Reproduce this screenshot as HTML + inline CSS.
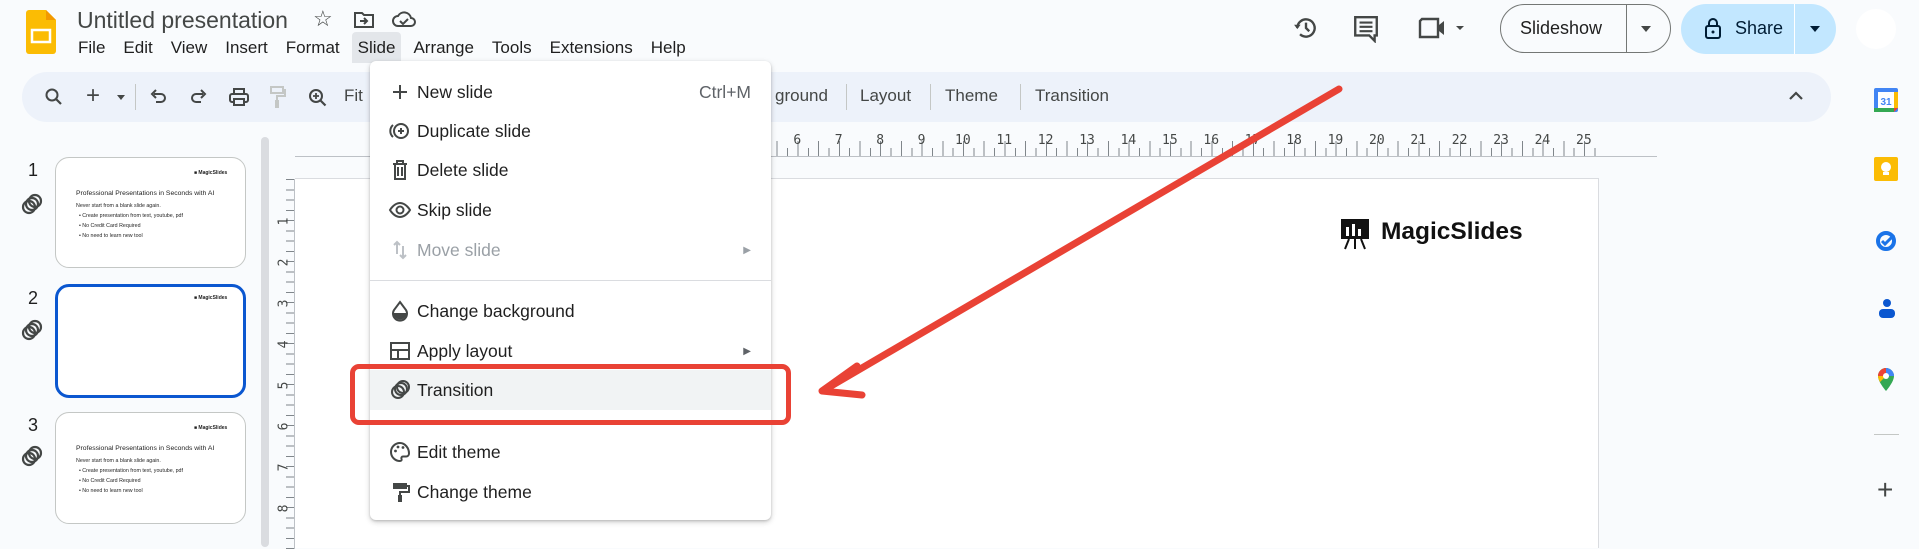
<!DOCTYPE html>
<html><head><meta charset="utf-8"><style>
*{margin:0;padding:0;box-sizing:border-box}
body{width:1919px;height:540px;overflow:hidden;background:#f9fbfd;font-family:"Liberation Sans",Arial,sans-serif;color:#1f1f1f;position:relative}
.a{position:absolute}
.menu span{margin-right:18px}
.tb{color:#444746;font-size:17px}
.mi{position:absolute;left:0;width:401px;height:40px;display:flex;align-items:center;font-size:17.5px;color:#1f1f1f}
.mi .ic{position:absolute;left:18px;top:8px;width:24px;height:24px}
.mi .t{position:absolute;left:47px}
.thumb{position:absolute;left:55px;width:191px;background:#fff;border:1px solid #c4c7c5;border-radius:14px}
.num{position:absolute;left:28px;font-size:18px;color:#1f1f1f}
.link{position:absolute;left:20px;width:24px;height:24px}
.rn{position:absolute;top:133px;font-size:13px;color:#444746;font-family:"DejaVu Sans Mono","Liberation Mono",monospace}
.vn{position:absolute;left:280px;font-size:13px;color:#444746;transform:rotate(-90deg);font-family:"DejaVu Sans Mono",monospace}
</style></head><body>

<svg class="a" style="left:26px;top:10px" width="30" height="44" viewBox="0 0 30 44"><path d="M3 0h17l10 10v31a3 3 0 0 1-3 3H3a3 3 0 0 1-3-3V3a3 3 0 0 1 3-3z" fill="#fbbc04"/><path d="M20 0l10 10H20z" fill="#f29900"/><rect x="6" y="20" width="18" height="12" fill="none" stroke="#fff" stroke-width="2.5"/></svg>
<div class="a" style="left:77px;top:7px;font-size:23px;color:#444746">Untitled presentation</div>
<div class="a" style="left:313px;top:6px;font-size:22px;color:#444746">☆</div>
<svg class="a" style="left:353px;top:10px" width="22" height="20" viewBox="0 0 22 20"><path d="M2 3h7l2 2h9v12H2z" fill="none" stroke="#444746" stroke-width="2"/><path d="M7 11h7M11 8l3 3-3 3" fill="none" stroke="#444746" stroke-width="2"/></svg>
<svg class="a" style="left:392px;top:10px" width="24" height="18" viewBox="0 0 24 18"><path d="M6 16a5 5 0 0 1 0-10 7 7 0 0 1 13 2 4 4 0 0 1 0 8z" fill="none" stroke="#444746" stroke-width="2"/><path d="M8 11l3 3 5-5" fill="none" stroke="#444746" stroke-width="2"/></svg>
<div class="a menu" style="left:78px;top:38px;font-size:17px;color:#1f1f1f;white-space:nowrap">
<span>File</span><span>Edit</span><span>View</span><span>Insert</span><span>Format</span><span style="background:#e3e6ea;padding:6px 6px;border-radius:4px 4px 0 0;margin-left:-6px;margin-right:12px">Slide</span><span>Arrange</span><span>Tools</span><span>Extensions</span><span>Help</span></div>

<svg class="a" style="left:1293px;top:15px" width="26" height="26" viewBox="0 0 24 24"><path d="M4 12a8 8 0 1 1 2.5 5.8" fill="none" stroke="#444746" stroke-width="2.2"/><path d="M1 9l3 4 3-4" fill="#444746"/><path d="M12 7v5l3 3" fill="none" stroke="#444746" stroke-width="2.2"/></svg>
<svg class="a" style="left:1353px;top:15px" width="26" height="28" viewBox="0 0 24 26"><path d="M2 2h20v17h-2v5l-5-5H2z" fill="none" stroke="#444746" stroke-width="2.2"/><path d="M6 7h12M6 11h12M6 15h12" stroke="#444746" stroke-width="2"/></svg>
<svg class="a" style="left:1418px;top:17px" width="50" height="22" viewBox="0 0 50 22"><path d="M4 2h16v18H2V4z" fill="none" stroke="#444746" stroke-width="2.4"/><path d="M21 8l5-4v14l-5-4z" fill="#444746"/><path d="M38 9h8l-4 4z" fill="#444746"/></svg>
<div class="a" style="left:1500px;top:4px;width:171px;height:49px;border:1px solid #747775;border-radius:25px"></div>
<div class="a" style="left:1626px;top:4px;width:1px;height:49px;background:#747775"></div>
<div class="a" style="left:1520px;top:18px;font-size:18px;color:#1f1f1f">Slideshow</div>
<div class="a" style="left:1641px;top:26px;border:5px solid transparent;border-top:6px solid #444746"></div>
<div class="a" style="left:1681px;top:4px;width:155px;height:50px;background:#c2e7ff;border-radius:25px"></div>
<div class="a" style="left:1794px;top:4px;width:1px;height:50px;background:#fff"></div>
<svg class="a" style="left:1704px;top:17px" width="18" height="22" viewBox="0 0 18 22"><rect x="2" y="9" width="14" height="12" rx="2" fill="none" stroke="#001d35" stroke-width="2"/><path d="M5 9V6a4 4 0 0 1 8 0v3" fill="none" stroke="#001d35" stroke-width="2"/><circle cx="9" cy="15" r="1.5" fill="#001d35"/></svg>
<div class="a" style="left:1735px;top:18px;font-size:18px;color:#001d35">Share</div>
<div class="a" style="left:1810px;top:26px;border:5px solid transparent;border-top:6px solid #001d35"></div>
<div class="a" style="left:1856px;top:9px;width:40px;height:40px;border-radius:50%;background:#fff"></div>

<div class="a" style="left:22px;top:72px;width:1809px;height:50px;background:#edf2fa;border-radius:25px"></div>
<svg class="a" style="left:44px;top:87px" width="20" height="20" viewBox="0 0 20 20"><circle cx="8" cy="8" r="5.5" fill="none" stroke="#444746" stroke-width="2"/><path d="M12 12l5 5" stroke="#444746" stroke-width="2.2"/></svg>
<div class="a tb" style="left:86px;top:82px;font-size:24px">+</div>
<div class="a" style="left:117px;top:95px;border:4px solid transparent;border-top:5px solid #444746"></div>
<div class="a" style="left:135px;top:84px;width:1px;height:26px;background:#c4c7c5"></div>
<svg class="a" style="left:150px;top:88px" width="18" height="18" viewBox="0 0 18 18"><path d="M4 6h7a4 4 0 0 1 0 8H6" fill="none" stroke="#444746" stroke-width="2"/><path d="M6 2L2 6l4 4" fill="none" stroke="#444746" stroke-width="2"/></svg>
<svg class="a" style="left:189px;top:88px" width="18" height="18" viewBox="0 0 18 18"><path d="M14 6H7a4 4 0 0 0 0 8h5" fill="none" stroke="#444746" stroke-width="2"/><path d="M12 2l4 4-4 4" fill="none" stroke="#444746" stroke-width="2"/></svg>
<svg class="a" style="left:228px;top:87px" width="22" height="20" viewBox="0 0 22 20"><rect x="2" y="7" width="18" height="8" rx="2" fill="none" stroke="#444746" stroke-width="2"/><rect x="6" y="2" width="10" height="5" fill="none" stroke="#444746" stroke-width="2"/><rect x="6" y="12" width="10" height="6" fill="#edf2fa" stroke="#444746" stroke-width="2"/></svg>
<svg class="a" style="left:268px;top:85px" width="18" height="24" viewBox="0 0 18 24"><rect x="3" y="2" width="12" height="6" fill="none" stroke="#c4c7c5" stroke-width="2"/><path d="M15 5h2v6H9v4" fill="none" stroke="#c4c7c5" stroke-width="2"/><rect x="7" y="15" width="4" height="8" fill="#c4c7c5"/></svg>
<svg class="a" style="left:307px;top:87px" width="22" height="22" viewBox="0 0 22 22"><circle cx="9" cy="9" r="6" fill="none" stroke="#444746" stroke-width="2"/><path d="M13.5 13.5l5 5" stroke="#444746" stroke-width="2.2"/><path d="M6 9h6M9 6v6" stroke="#444746" stroke-width="1.8"/></svg>
<div class="a tb" style="left:344px;top:86px">Fit</div>
<div class="a tb" style="left:775px;top:86px">ground</div>
<div class="a" style="left:846px;top:84px;width:1px;height:26px;background:#c4c7c5"></div>
<div class="a tb" style="left:860px;top:86px">Layout</div>
<div class="a" style="left:930px;top:84px;width:1px;height:26px;background:#c4c7c5"></div>
<div class="a tb" style="left:945px;top:86px">Theme</div>
<div class="a" style="left:1020px;top:84px;width:1px;height:26px;background:#c4c7c5"></div>
<div class="a tb" style="left:1035px;top:86px">Transition</div>
<svg class="a" style="left:1788px;top:90px" width="16" height="12" viewBox="0 0 16 12"><path d="M2 9l6-6 6 6" fill="none" stroke="#444746" stroke-width="2.2"/></svg>

<svg class="a" style="left:1874px;top:88px" width="24" height="24" viewBox="0 0 24 24"><rect x="0" y="0" width="24" height="24" rx="2" fill="#4285f4"/><rect x="4" y="4" width="16" height="16" fill="#fff"/><rect x="0" y="20" width="20" height="4" fill="#34a853"/><rect x="20" y="4" width="4" height="16" fill="#fbbc04"/><path d="M20 20h4l-4 4z" fill="#ea4335"/><text x="12" y="17" font-size="10" font-weight="bold" text-anchor="middle" fill="#4285f4" font-family="Liberation Sans">31</text></svg>
<svg class="a" style="left:1874px;top:157px" width="24" height="24" viewBox="0 0 24 24"><rect width="24" height="24" rx="2" fill="#fbbc04"/><circle cx="12" cy="10" r="5" fill="#fff"/><rect x="9" y="15" width="6" height="3" fill="#fff"/></svg>
<svg class="a" style="left:1875px;top:228px" width="24" height="24" viewBox="0 0 24 24"><circle cx="11" cy="13" r="8" fill="none" stroke="#1a73e8" stroke-width="4"/><path d="M7 13l3 3 9-9" fill="none" stroke="#1a73e8" stroke-width="3"/></svg>
<svg class="a" style="left:1877px;top:298px" width="20" height="22" viewBox="0 0 20 22"><circle cx="10" cy="5" r="4" fill="#0b57d0"/><rect x="2" y="11" width="16" height="9" rx="4" fill="#0b57d0"/></svg>
<svg class="a" style="left:1878px;top:368px" width="16" height="24" viewBox="0 0 16 24"><path d="M8 0a8 8 0 0 1 8 8c0 6-8 15-8 15S0 14 0 8a8 8 0 0 1 8-8z" fill="#34a853"/><path d="M8 0a8 8 0 0 1 8 8L8 8z" fill="#4285f4"/><path d="M8 0A8 8 0 0 0 0 8h8z" fill="#ea4335"/><path d="M0 8c0 2 1 4 2 6l6-6z" fill="#fbbc04"/><circle cx="8" cy="8" r="3" fill="#fff"/></svg>
<div class="a" style="left:1874px;top:434px;width:25px;height:1px;background:#c4c7c5"></div>
<div class="a" style="left:1877px;top:474px;font-size:28px;color:#444746">+</div>

<div class="num" style="top:160px">1</div>
<div class="num" style="top:288px">2</div>
<div class="num" style="top:415px">3</div>
<svg class="link" style="top:192px" viewBox="0 0 24 24"><circle cx="9" cy="15" r="6" fill="none" stroke="#444746" stroke-width="2.2"/><circle cx="12" cy="12" r="6" fill="none" stroke="#444746" stroke-width="2.2"/><circle cx="15" cy="9" r="6" fill="none" stroke="#444746" stroke-width="2.2"/></svg>
<svg class="link" style="top:318px" viewBox="0 0 24 24"><circle cx="9" cy="15" r="6" fill="none" stroke="#444746" stroke-width="2.2"/><circle cx="12" cy="12" r="6" fill="none" stroke="#444746" stroke-width="2.2"/><circle cx="15" cy="9" r="6" fill="none" stroke="#444746" stroke-width="2.2"/></svg>
<svg class="link" style="top:444px" viewBox="0 0 24 24"><circle cx="9" cy="15" r="6" fill="none" stroke="#444746" stroke-width="2.2"/><circle cx="12" cy="12" r="6" fill="none" stroke="#444746" stroke-width="2.2"/><circle cx="15" cy="9" r="6" fill="none" stroke="#444746" stroke-width="2.2"/></svg>

<div class="thumb" style="top:157px;height:111px">
<div class="a" style="left:138px;top:12px;font-size:5px;font-weight:bold">■ MagicSlides</div>
<div class="a" style="left:20px;top:32px;font-size:6.8px;white-space:nowrap">Professional Presentations in Seconds with AI</div>
<div class="a" style="left:20px;top:43px;font-size:5.3px;line-height:10px;white-space:nowrap">Never start from a blank slide again.<br>&nbsp;&nbsp;• Create presentation from text, youtube, pdf<br>&nbsp;&nbsp;• No Credit Card Required<br>&nbsp;&nbsp;• No need to learn new tool</div>
</div>
<div class="thumb" style="top:284px;height:114px;border:3px solid #0b57d0">
<div class="a" style="left:136px;top:8px;font-size:5px;font-weight:bold">■ MagicSlides</div>
</div>
<div class="thumb" style="top:412px;height:112px">
<div class="a" style="left:138px;top:12px;font-size:5px;font-weight:bold">■ MagicSlides</div>
<div class="a" style="left:20px;top:32px;font-size:6.8px;white-space:nowrap">Professional Presentations in Seconds with AI</div>
<div class="a" style="left:20px;top:43px;font-size:5.3px;line-height:10px;white-space:nowrap">Never start from a blank slide again.<br>&nbsp;&nbsp;• Create presentation from text, youtube, pdf<br>&nbsp;&nbsp;• No Credit Card Required<br>&nbsp;&nbsp;• No need to learn new tool</div>
</div>
<div class="a" style="left:261px;top:137px;width:8px;height:410px;background:#dadce0;border-radius:4px"></div>

<div class="a" style="left:549px;top:148px;width:1051px;height:8px;background:repeating-linear-gradient(90deg,#80868b 0 1px,transparent 1px 10.35px)"></div>
<div class="a" style="left:549px;top:141px;width:1051px;height:15px;background:repeating-linear-gradient(90deg,#80868b 0 1px,transparent 1px 20.7px)"></div>
<div class="a" style="left:295px;top:156px;width:1362px;height:1px;background:#bdc1c6"></div>
<div id="rn"></div>
<div class="a" style="left:286px;top:179px;width:8px;height:370px;background:repeating-linear-gradient(180deg,#80868b 0 1px,transparent 1px 10.25px)"></div>
<div class="a" style="left:294px;top:179px;width:1px;height:370px;background:#bdc1c6"></div>
<div class="vn" style="top:214px">1</div><div class="vn" style="top:255px">2</div><div class="vn" style="top:296px">3</div><div class="vn" style="top:337px">4</div><div class="vn" style="top:378px">5</div><div class="vn" style="top:419px">6</div><div class="vn" style="top:460px">7</div><div class="vn" style="top:501px">8</div>

<div class="a" style="left:295px;top:178px;width:1304px;height:370px;background:#fff;border-top:1px solid #dadce0;border-right:1px solid #dadce0"></div>
<svg class="a" style="left:1340px;top:218px" width="30" height="32" viewBox="0 0 30 32"><rect x="1" y="1" width="28" height="20" fill="#111"/><rect x="6" y="9" width="3" height="9" fill="#fff"/><rect x="12" y="6" width="3" height="12" fill="#fff"/><rect x="18" y="11" width="3" height="7" fill="#fff"/><path d="M9 21l-4 10M21 21l4 10M15 21v10" stroke="#111" stroke-width="2"/></svg>
<div class="a" style="left:1381px;top:218px;font-size:24.5px;font-weight:bold;color:#111">MagicSlides</div>

<div class="a" style="left:370px;top:61px;width:401px;height:459px;background:#fff;border-radius:6px;box-shadow:0 2px 6px rgba(0,0,0,.2),0 1px 2px rgba(0,0,0,.15)">
<div class="mi" style="top:11px"><svg class="ic" viewBox="0 0 24 24"><path d="M12 5v14M5 12h14" stroke="#444746" stroke-width="2"/></svg><span class="t">New slide</span><span style="position:absolute;right:20px;color:#5f6368">Ctrl+M</span></div>
<div class="mi" style="top:50px"><svg class="ic" viewBox="0 0 24 24"><circle cx="13" cy="12" r="7" fill="none" stroke="#444746" stroke-width="2"/><path d="M5 6a8 8 0 0 0 0 12" fill="none" stroke="#444746" stroke-width="2"/><path d="M13 9v6M10 12h6" stroke="#444746" stroke-width="2"/></svg><span class="t">Duplicate slide</span></div>
<div class="mi" style="top:89px"><svg class="ic" viewBox="0 0 24 24"><path d="M5 6h14M9 6V3h6v3M7 6v15h10V6M10 9v9M14 9v9" fill="none" stroke="#444746" stroke-width="2"/></svg><span class="t">Delete slide</span></div>
<div class="mi" style="top:129px"><svg class="ic" viewBox="0 0 24 24"><path d="M2 12s4-7 10-7 10 7 10 7-4 7-10 7S2 12 2 12z" fill="none" stroke="#444746" stroke-width="2"/><circle cx="12" cy="12" r="3.5" fill="none" stroke="#444746" stroke-width="2"/></svg><span class="t">Skip slide</span></div>
<div class="mi" style="top:169px;color:#9aa0a6"><svg class="ic" viewBox="0 0 24 24"><path d="M9 4v12M6 7l3-3 3 3M15 8v12M12 17l3 3 3-3" fill="none" stroke="#bdc1c6" stroke-width="2"/></svg><span class="t">Move slide</span><span style="position:absolute;right:20px;font-size:10px;color:#9aa0a6">▶</span></div>
<div class="a" style="left:0;top:219px;width:401px;height:1px;background:#dadce0"></div>
<div class="mi" style="top:230px"><svg class="ic" viewBox="0 0 24 24"><path d="M12 3l6 8a7 7 0 1 1-12 0z" fill="none" stroke="#444746" stroke-width="2"/><path d="M5.5 14h13a6.5 6.5 0 0 1-13 0z" fill="#444746"/></svg><span class="t">Change background</span></div>
<div class="mi" style="top:270px"><svg class="ic" viewBox="0 0 24 24"><rect x="3" y="4" width="18" height="16" fill="none" stroke="#444746" stroke-width="2"/><path d="M3 11h18M10 11v9" stroke="#444746" stroke-width="2"/></svg><span class="t">Apply layout</span><span style="position:absolute;right:20px;font-size:10px;color:#5f6368">▶</span></div>
<div class="mi" style="top:309px;background:#f1f3f4"><svg class="ic" viewBox="0 0 24 24"><circle cx="10" cy="14" r="6" fill="none" stroke="#444746" stroke-width="2"/><circle cx="13" cy="11" r="6" fill="none" stroke="#444746" stroke-width="2"/><circle cx="15" cy="9" r="6" fill="none" stroke="#444746" stroke-width="2"/></svg><span class="t">Transition</span></div>
<div class="a" style="left:0;top:360px;width:401px;height:1px;background:#dadce0"></div>
<div class="mi" style="top:371px"><svg class="ic" viewBox="0 0 24 24"><path d="M12 3a9 9 0 0 0 0 18c1.5 0 2-1 1.5-2-.6-1.3.3-2.5 1.5-2.5H18a3 3 0 0 0 3-3c0-5.5-4-10.5-9-10.5z" fill="none" stroke="#444746" stroke-width="2"/><circle cx="7.5" cy="11" r="1.4" fill="#444746"/><circle cx="10" cy="7" r="1.4" fill="#444746"/><circle cx="15" cy="7.5" r="1.4" fill="#444746"/></svg><span class="t">Edit theme</span></div>
<div class="mi" style="top:411px"><svg class="ic" viewBox="0 0 24 24"><rect x="5" y="3" width="14" height="6" fill="#444746"/><path d="M19 6h2v6h-9v3" fill="none" stroke="#444746" stroke-width="2"/><rect x="10" y="15" width="4" height="7" fill="#444746"/></svg><span class="t">Change theme</span></div>
</div>

<div class="a" style="left:350px;top:364px;width:441px;height:61px;border:5px solid #e94235;border-radius:9px"></div>
<svg class="a" style="left:0;top:0" width="1919" height="540"><g stroke="#e94235" stroke-width="7" stroke-linecap="round" fill="none"><path d="M1339 89L826 389"/><path d="M822 391L857 366M822 391L862 395"/></g></svg>

<script>
var h='';for(var i=1;i<=25;i++){var x=549+i*41.4-4-(i>9?4:0);h+='<div class="rn" style="left:'+x+'px">'+i+'</div>';}
document.getElementById('rn').outerHTML=h;
</script>
</body></html>
